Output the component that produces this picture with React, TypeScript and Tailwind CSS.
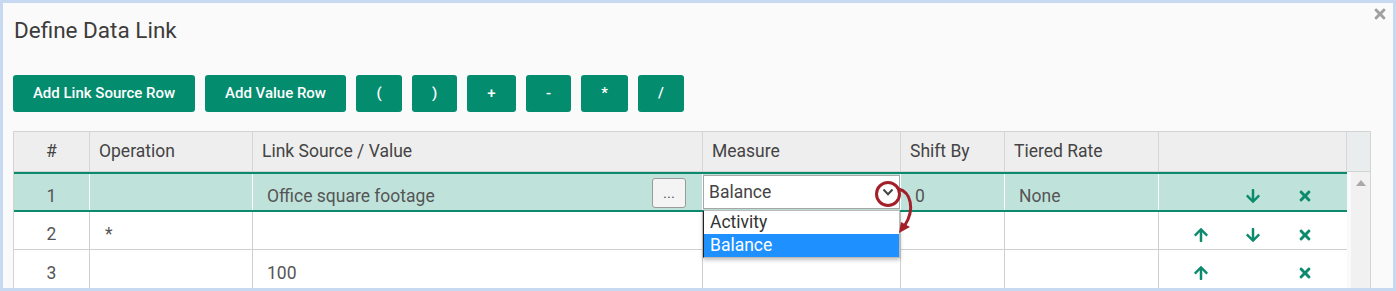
import { FaArrowUp, FaArrowDown, FaTimes } from "react-icons/fa";

const cols = [76, 163, 450, 198, 104, 154, 188];

const buttons = [
  { label: "Add Link Source Row", w: "w-[182px]" },
  { label: "Add Value Row", w: "w-[141px]" },
  { label: "(", w: "w-[46px]" },
  { label: ")", w: "w-[45px]" },
  { label: "+", w: "w-[49px]" },
  { label: "-", w: "w-[45px]" },
  { label: "*", w: "w-[47px]" },
  { label: "/", w: "w-[46px]" },
];

function Actions({ up, down }: { up: boolean; down: boolean }) {
  return (
    <div className="flex items-center pl-[16px] pt-[8px] h-full text-[#0b8a6c]">
      <span className="w-[52px] flex justify-center">{up && <FaArrowUp size={16} />}</span>
      <span className="w-[52px] flex justify-center">{down && <FaArrowDown size={16} />}</span>
      <span className="w-[52px] flex justify-center">
        <FaTimes size={16} />
      </span>
    </div>
  );
}

function Cell({
  i,
  children,
  sel,
  className = "",
}: {
  i: number;
  children?: React.ReactNode;
  sel?: boolean;
  className?: string;
}) {
  return (
    <div
      className={`h-full shrink-0 border-r ${sel ? "border-white" : "border-[#cfcfcf]"} ${className}`}
      style={{ width: cols[i] }}
    >
      {children}
    </div>
  );
}

export default function App() {
  const headers = ["#", "Operation", "Link Source / Value", "Measure", "Shift By", "Tiered Rate", ""];

  return (
    <div
      className="w-[1396px] h-[291px] bg-[#c7d9f1] p-[3px] overflow-hidden"
      style={{ fontFamily: "Roboto, 'Liberation Sans', sans-serif" }}
    >
      <div className="relative h-[285px] bg-[#fafafa] overflow-hidden pl-[10px]">
        <button className="absolute right-[5px] top-[3px] text-[#a0a0a0]">
          <FaTimes size={16} />
        </button>

        <h2 className="pt-[13px] pl-[1px] text-[22.5px] leading-[28px] text-[#3c3c3c]">Define Data Link</h2>

        <div className="flex gap-[10px] mt-[31px]">
          {buttons.map((b) => (
            <button
              key={b.label}
              className={`${b.w} h-[37px] rounded-[3px] bg-[#038c6e] text-white text-[15px] font-medium`}
            >
              {b.label}
            </button>
          ))}
        </div>

        <div className="mt-[19px] w-[1358px] border-l border-t border-[#d3d3d3]">
          {/* header */}
          <div className="flex h-[40px] bg-[#eeeeee] border-b border-[#d3d3d3] text-[17.5px] text-[#444]">
            {headers.map((h, i) => (
              <div
                key={i}
                className={`h-full shrink-0 flex items-center border-r border-[#d6d6d6] ${i === 0 ? "justify-center" : "pl-[9px]"}`}
                style={{ width: cols[i] }}
              >
                {h}
              </div>
            ))}
            <div className="w-[25px] h-full bg-[#eaeded] border-r border-[#d3d3d3]" />
          </div>

          <div className="flex">
            <div className="w-[1333px] text-[17.5px] text-[#555]">
              {/* row 1 */}
              <div className="flex h-[40px] bg-[#bfe3db] border-y-2 border-[#0b8a6c]">
                <Cell i={0} sel className="flex items-center justify-center pt-[8px]">1</Cell>
                <Cell i={1} sel />
                <Cell i={2} sel className="flex items-center pl-[14px] pr-[16px]">
                  <span className="pt-[8px] flex-1">Office square footage</span>
                  <span className="w-[34px] h-[30px] mt-[1px] rounded-[3px] border border-[#9a9a9a] bg-[#f4f4f4] text-[#555] text-[15px] flex items-end justify-center pb-[6px] leading-none">
                    ...
                  </span>
                </Cell>
                <Cell i={3} sel className="relative">
                  <div className="mt-[1px] w-[197px] h-[34px] bg-white border border-[#a8a8a8] flex items-center pl-[5px] text-[#444]">
                    <span className="flex-1">Balance</span>
                    <svg width="12" height="8" viewBox="0 0 12 8" className="mr-[5px]">
                      <polyline points="1.5,1.5 6,6.2 10.5,1.5" fill="none" stroke="#444" strokeWidth="2" />
                    </svg>
                  </div>
                  <div className="absolute z-10 left-0 top-[36px] w-[197px] bg-white border border-[#bbb] border-l-[#222] shadow-[0_2px_4px_rgba(0,0,0,0.25)] text-[17.5px]">
                    <div className="h-[23px] leading-[23px] pl-[6px] text-[#333]">Activity</div>
                    <div className="h-[23px] leading-[23px] pl-[6px] bg-[#1e90ff] text-white">Balance</div>
                  </div>
                  <svg
                    width="48"
                    height="62"
                    viewBox="0 0 48 62"
                    className="absolute z-20 left-[170px] top-[5px] overflow-visible"
                  >
                    <circle cx="15" cy="15" r="11.5" fill="none" stroke="#a3202b" strokeWidth="3" />
                    <path d="M25.5 10 C 38 13, 42 30, 32 46" fill="none" stroke="#a3202b" strokeWidth="3" />
                    <polygon points="26,54 28,43 37,48" fill="#a3202b" />
                  </svg>
                </Cell>
                <Cell i={4} sel className="flex items-center pl-[14px] pt-[8px]">0</Cell>
                <Cell i={5} sel className="flex items-center pl-[14px] pt-[8px]">None</Cell>
                <Cell i={6} sel className="border-r-0">
                  <Actions up={false} down />
                </Cell>
              </div>

              {/* row 2 */}
              <div className="flex h-[38px] bg-white border-b border-[#cfcfcf]">
                <Cell i={0} className="flex items-center justify-center pt-[8px]">2</Cell>
                <Cell i={1} className="flex items-center pl-[15px] pt-[8px]">*</Cell>
                <Cell i={2} />
                <Cell i={3} />
                <Cell i={4} />
                <Cell i={5} />
                <Cell i={6} className="border-r-0">
                  <Actions up down />
                </Cell>
              </div>

              {/* row 3 */}
              <div className="flex h-[38px] bg-white">
                <Cell i={0} className="flex items-center justify-center pt-[8px]">3</Cell>
                <Cell i={1} />
                <Cell i={2} className="flex items-center pl-[14px] pt-[8px]">100</Cell>
                <Cell i={3} />
                <Cell i={4} />
                <Cell i={5} />
                <Cell i={6} className="border-r-0">
                  <Actions up down={false} />
                </Cell>
              </div>
            </div>

            {/* scrollbar */}
            <div className="w-[25px] h-[120px] pl-[4px] bg-[#fafafa] border-r border-[#d3d3d3]">
              <div className="h-full bg-[#f1f1f1] flex justify-center pt-[8px]">
                <svg width="10" height="6" viewBox="0 0 10 6">
                  <polygon points="0,6 5,0 10,6" fill="#a9a9a9" />
                </svg>
              </div>
            </div>
          </div>
        </div>
      </div>
    </div>
  );
}
